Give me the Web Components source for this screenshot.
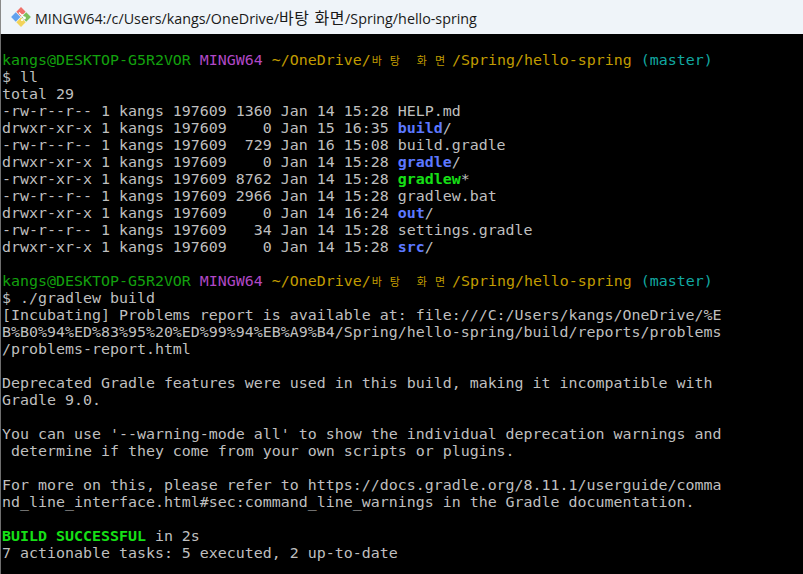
<!DOCTYPE html>
<html>
<head>
<meta charset="utf-8">
<title>MINGW64</title>
<style>
  html, body { margin: 0; padding: 0; background: #000; }
</style>
</head>
<body>
<term-window>
  <span slot="title">MINGW64:/c/Users/kangs/OneDrive/<title-ko>바탕 화면</title-ko>/Spring/hello-spring</span>
  <term-line></term-line>
  <term-prompt></term-prompt>
  <term-line>$ ll</term-line>
  <term-line>total 29</term-line>
  <term-line>-rw-r--r-- 1 kangs 197609 1360 Jan 14 15:28 HELP.md</term-line>
  <term-line>drwxr-xr-x 1 kangs 197609    0 Jan 15 16:35 <term-c c="dir">build</term-c>/</term-line>
  <term-line>-rw-r--r-- 1 kangs 197609  729 Jan 16 15:08 build.gradle</term-line>
  <term-line>drwxr-xr-x 1 kangs 197609    0 Jan 14 15:28 <term-c c="dir">gradle</term-c>/</term-line>
  <term-line>-rwxr-xr-x 1 kangs 197609 8762 Jan 14 15:28 <term-c c="exe">gradlew</term-c>*</term-line>
  <term-line>-rw-r--r-- 1 kangs 197609 2966 Jan 14 15:28 gradlew.bat</term-line>
  <term-line>drwxr-xr-x 1 kangs 197609    0 Jan 14 16:24 <term-c c="dir">out</term-c>/</term-line>
  <term-line>-rw-r--r-- 1 kangs 197609   34 Jan 14 15:28 settings.gradle</term-line>
  <term-line>drwxr-xr-x 1 kangs 197609    0 Jan 14 15:28 <term-c c="dir">src</term-c>/</term-line>
  <term-line></term-line>
  <term-prompt></term-prompt>
  <term-line>$ ./gradlew build</term-line>
  <term-line>[Incubating] Problems report is available at: file:///C:/Users/kangs/OneDrive/%E</term-line>
  <term-line>B%B0%94%ED%83%95%20%ED%99%94%EB%A9%B4/Spring/hello-spring/build/reports/problems</term-line>
  <term-line>/problems-report.html</term-line>
  <term-line></term-line>
  <term-line>Deprecated Gradle features were used in this build, making it incompatible with</term-line>
  <term-line>Gradle 9.0.</term-line>
  <term-line></term-line>
  <term-line>You can use '--warning-mode all' to show the individual deprecation warnings and</term-line>
  <term-line> determine if they come from your own scripts or plugins.</term-line>
  <term-line></term-line>
  <term-line>For more on this, please refer to https://docs.gradle.org/8.11.1/userguide/comma</term-line>
  <term-line>nd_line_interface.html#sec:command_line_warnings in the Gradle documentation.</term-line>
  <term-line></term-line>
  <term-line><term-c c="exe">BUILD SUCCESSFUL</term-c> in 2s</term-line>
  <term-line>7 actionable tasks: 5 executed, 2 up-to-date</term-line>
</term-window>

<template id="term-window-tpl">
  <style>
    :host { display: flex; flex-direction: column; width: 803px; height: 574px; overflow: hidden; background: #000; }
    .bar { flex: 0 0 34px; display: flex; align-items: center; gap: 4px; padding-left: 10px; background: #eff4f9; border-left: 1px solid #8a8a8a; box-sizing: border-box; color: #1a1a1a;
      font: 14.3px "Open Sans", "Noto Sans CJK KR", sans-serif; white-space: nowrap; }
    svg { flex: none; width: 20px; height: 20px; }
    .body { flex: 1; border-left: 1px solid #6e6e6e; padding: 1px 0 0 1px; color: #bfbfbf;
      font: 14.95px/17px "DejaVu Sans Mono", monospace; overflow: hidden; }
  </style>
  <div class="bar">
    <svg viewBox="0 0 20 20">
      <g transform="rotate(45 10 10)">
        <rect x="3" y="3" width="6.6" height="6.6" fill="#f0716a"/>
        <rect x="10.4" y="3" width="6.6" height="6.6" fill="#7cc05a"/>
        <rect x="10.4" y="10.4" width="6.6" height="6.6" fill="#f2d35a"/>
        <rect x="3" y="10.4" width="6.6" height="6.6" fill="#62a2ee"/>
      </g>
      <path d="M8 5.5l5.5 5.5M12 7.5l-1.5 1.5" stroke="#fff" stroke-width="1.3" fill="none"/>
      <circle cx="13.5" cy="11" r="1.4" fill="#fff"/>
      <circle cx="11" cy="13" r="1.1" fill="#fff"/>
    </svg>
    <slot name="title"></slot>
  </div>
  <div class="body"><slot></slot></div>
</template>

<script>
class TermWindow extends HTMLElement {
  constructor() {
    super();
    this.attachShadow({ mode: "open" });
    this.shadowRoot.append(document.getElementById("term-window-tpl").content.cloneNode(true));
  }
}

class TitleKo extends HTMLElement {
  constructor() {
    super();
    this.attachShadow({ mode: "open" }).innerHTML = `<style>
      :host { display: inline; font-size: 16px; letter-spacing: .6px; }
    </style><slot></slot>`;
  }
}

class TermLine extends HTMLElement {
  constructor() {
    super();
    this.attachShadow({ mode: "open" }).innerHTML = `<style>
      :host { display: block; height: 17px; white-space: pre; }
    </style><slot></slot>`;
  }
}

// one coloured run of terminal text
class TermC extends HTMLElement {
  constructor() {
    super();
    this.attachShadow({ mode: "open" }).innerHTML = `<style>
      :host { display: inline; }
      :host([c="user"]) { color: #13a10e; }
      :host([c="sys"]) { color: #b148c6; }
      :host([c="path"]) { color: #c19c00; }
      :host([c="branch"]) { color: #11a8a0; }
      :host([c="dir"]) { color: #5c78ff; font-weight: bold; }
      :host([c="exe"]) { color: #16e016; font-weight: bold; }
    </style><slot></slot>`;
  }
}

// korean glyph drawn small inside a double width cell
class TermWide extends HTMLElement {
  constructor() {
    super();
    this.attachShadow({ mode: "open" }).innerHTML = `<style>
      :host { display: inline-block; width: 18.06px; height: 17px; vertical-align: top; padding-left: 1px; box-sizing: border-box;
        font: 11px/17px "Noto Sans CJK KR", sans-serif; }
    </style><slot></slot>`;
  }
}

class TermPrompt extends HTMLElement {
  constructor() {
    super();
    this.attachShadow({ mode: "open" }).innerHTML = `<style>
      :host { display: block; height: 17px; white-space: pre; }
    </style><term-c c="user">kangs@DESKTOP-G5R2VOR</term-c> <term-c c="sys">MINGW64</term-c> <term-c c="path">~/OneDrive/<term-wide>바</term-wide><term-wide>탕</term-wide> <term-wide>화</term-wide><term-wide>면</term-wide>/Spring/hello-spring</term-c> <term-c c="branch">(master)</term-c>`;
  }
}

customElements.define("title-ko", TitleKo);
customElements.define("term-c", TermC);
customElements.define("term-wide", TermWide);
customElements.define("term-line", TermLine);
customElements.define("term-prompt", TermPrompt);
customElements.define("term-window", TermWindow);
</script>
</body>
</html>
